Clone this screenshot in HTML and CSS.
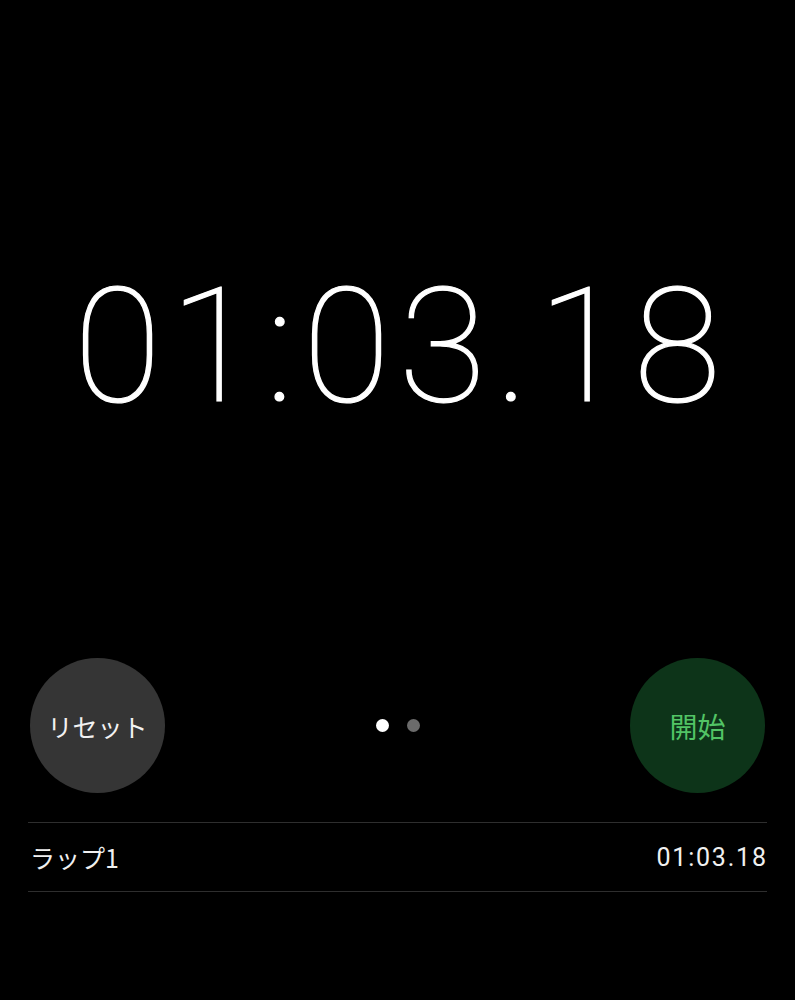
FILE: index.html
```html
<!DOCTYPE html>
<html lang="ja">
<head>
<meta charset="utf-8">
<link rel="stylesheet" href="styles.css">
</head>
<body>
<main class="app">
  <section class="display">
    <div class="time">01:03.18</div>
  </section>
  <section class="controls">
    <button class="btn btn-reset">リセット</button>
    <div class="pager">
      <span class="dot dot-on"></span>
      <span class="dot"></span>
    </div>
    <button class="btn btn-start">開始</button>
  </section>
  <ul class="laps">
    <li class="lap">
      <span class="lap-name">ラップ1</span>
      <span class="lap-time">01:03.18</span>
    </li>
  </ul>
</main>
</body>
</html>
```
FILE: styles.css
```css
html, body {
  margin: 0;
  padding: 0;
  background: #000;
}
body {
  width: 795px;
  height: 1000px;
  overflow: hidden;
  font-family: "Noto Sans CJK JP", "Noto Sans", sans-serif;
  color: #fff;
}
.app {
  display: flex;
  flex-direction: column;
}
.display {
  display: flex;
  justify-content: center;
  padding-top: 267px;
  height: 410px;
  box-sizing: border-box;
}
.time {
  font-family: "Roboto", "Inter", sans-serif;
  font-weight: 100;
  font-size: 160px;
  line-height: 1;
  letter-spacing: 8.5px;
  margin-right: -8.5px;
  font-variant-numeric: tabular-nums;
  -webkit-text-stroke: 1.2px #fff;
}
.controls {
  display: flex;
  align-items: center;
  justify-content: space-between;
  padding: 248px 30px 0;
}
.btn {
  width: 135px;
  height: 135px;
  border-radius: 50%;
  border: none;
  padding: 0;
  font-family: "Noto Sans CJK JP", sans-serif;
  display: flex;
  align-items: center;
  justify-content: center;
}
.btn-reset {
  background: #353535;
  color: #f2f2f2;
  font-size: 25px;
}
.btn-start {
  background: #0d3419;
  color: #52c465;
  font-size: 28px;
}
.pager {
  display: flex;
  gap: 18px;
  margin-left: 1px;
}
.dot {
  width: 13px;
  height: 13px;
  border-radius: 50%;
  background: #6b6b6b;
}
.dot-on {
  background: #fff;
}
.laps {
  list-style: none;
  margin: 29px 28px 0;
  padding: 0;
  border-top: 1px solid #2e2e2e;
}
.lap {
  display: flex;
  justify-content: space-between;
  align-items: center;
  height: 68px;
  border-bottom: 1px solid #2e2e2e;
  font-size: 25px;
  color: #f0f0f0;
}
.lap-name {
  padding-left: 2px;
}
.lap-time {
  font-family: "Roboto", "Noto Sans", sans-serif;
  font-size: 25px;
  letter-spacing: 1.8px;
  margin-right: -0.8px;
}
```
